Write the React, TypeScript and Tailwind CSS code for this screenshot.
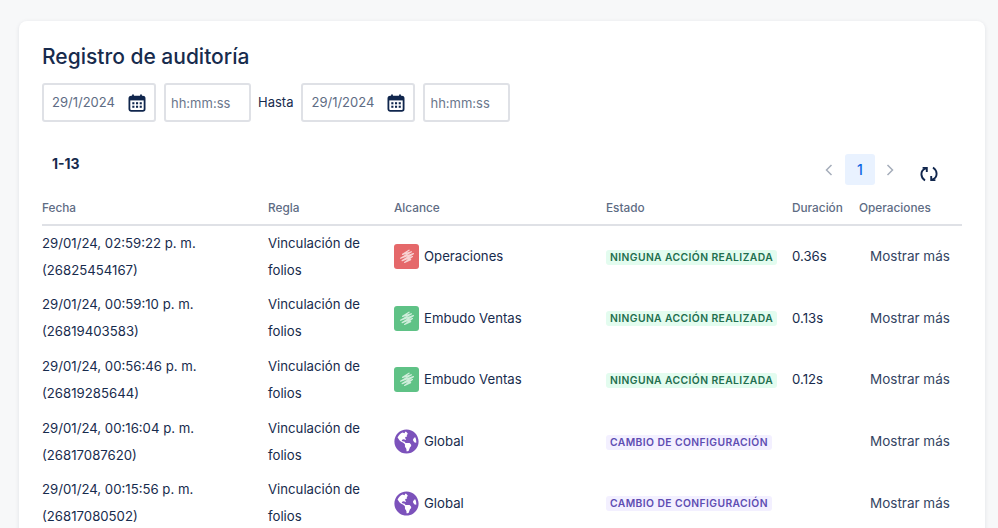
import { FaGlobeAmericas } from "react-icons/fa";

const FONT = "font-['Inter',sans-serif]";

function CalendarIcon() {
  return (
    <svg width="18" height="18" viewBox="0 0 18 18" className="shrink-0">
      <path d="M5 0.5v3.5M13 0.5v3.5" stroke="#10264d" strokeWidth="1.8" />
      <rect x="1.4" y="2.6" width="15.2" height="14.2" rx="1.8" fill="none" stroke="#10264d" strokeWidth="1.8" />
      <rect x="1.5" y="2.6" width="15" height="3.8" fill="#10264d" />
      <g fill="#10264d">
        <rect x="4.3" y="8.2" width="2.1" height="2.1" />
        <rect x="8" y="8.2" width="2.1" height="2.1" />
        <rect x="11.7" y="8.2" width="2.1" height="2.1" />
        <rect x="4.3" y="11.7" width="2.1" height="2.1" />
        <rect x="8" y="11.7" width="2.1" height="2.1" />
        <rect x="11.7" y="11.7" width="2.1" height="2.1" />
      </g>
    </svg>
  );
}

function RefreshIcon() {
  return (
    <svg width="18" height="18" viewBox="0 0 18 18" fill="none" stroke="#10264d" strokeWidth="1.9">
      <path d="M6 3.4C3 4.2 1.4 6.6 1.4 9.2c0 2.5 1.3 4.7 3.6 6.3" />
      <path d="M2.6 2.9H6.8V7" />
      <path d="M12 14.6c3-.8 4.6-3.2 4.6-5.8 0-2.5-1.3-4.7-3.6-6.3" />
      <path d="M15.4 15.1H11.2V11" />
    </svg>
  );
}

function Scribble({ bg }: { bg: string }) {
  return (
    <span className={`flex h-[25px] w-[25px] shrink-0 items-center justify-center rounded-[3px] ${bg}`}>
      <svg width="16" height="15" viewBox="0 0 16 15" fill="none" stroke="#ffffff" strokeOpacity="0.7" strokeWidth="1.3" strokeLinecap="round" strokeLinejoin="round">
        <path d="M10 1.2 3.6 5.4 12.4 2.8 1.6 9.2 14.4 4.6 3.2 11.6 13.4 7.6 5.6 13.4 11.6 10.6" />
      </svg>
    </span>
  );
}

function DateBox() {
  return (
    <div className="flex h-[39px] w-[114px] items-center justify-between rounded-[3px] border-2 border-[#dfe1e6] pl-[8px] pr-[8px]">
      <span className="text-[13px] text-[#5e6c84]">29/1/2024</span>
      <CalendarIcon />
    </div>
  );
}

function TimeBox() {
  return (
    <div className="flex h-[39px] w-[87px] items-center rounded-[3px] border-2 border-[#dfe1e6] pl-[5px]">
      <span className="pt-[3px] text-[13px] text-[#6b778c]">hh:mm:ss</span>
    </div>
  );
}

type Row = {
  date: string;
  id: string;
  scope: "red" | "green" | "global";
  scopeName: string;
  status: "none" | "config";
  duration: string;
};

const rows: Row[] = [
  { date: "29/01/24, 02:59:22 p. m.", id: "(26825454167)", scope: "red", scopeName: "Operaciones", status: "none", duration: "0.36s" },
  { date: "29/01/24, 00:59:10 p. m.", id: "(26819403583)", scope: "green", scopeName: "Embudo Ventas", status: "none", duration: "0.13s" },
  { date: "29/01/24, 00:56:46 p. m.", id: "(26819285644)", scope: "green", scopeName: "Embudo Ventas", status: "none", duration: "0.12s" },
  { date: "29/01/24, 00:16:04 p. m.", id: "(26817087620)", scope: "global", scopeName: "Global", status: "config", duration: "" },
  { date: "29/01/24, 00:15:56 p. m.", id: "(26817080502)", scope: "global", scopeName: "Global", status: "config", duration: "" },
];

const GRID = "grid grid-cols-[226px_126px_212px_186px_67px_103px]";

function ScopeIcon({ scope }: { scope: Row["scope"] }) {
  if (scope === "red") return <Scribble bg="bg-[#e5686a]" />;
  if (scope === "green") return <Scribble bg="bg-[#5fc286]" />;
  return <FaGlobeAmericas className="shrink-0 text-[25px] text-[#7c52bb]" />;
}

function Status({ status }: { status: Row["status"] }) {
  if (status === "none") {
    return (
      <span className="mt-px rounded-[3px] bg-[#e3fcef] px-[4px] text-[10.3px] font-semibold leading-[15px] tracking-[0.42px] text-[#216e4e]">
        NINGUNA ACCIÓN REALIZADA
      </span>
    );
  }
  return (
    <span className="mt-px rounded-[3px] bg-[#f3f0ff] px-[4px] text-[10.3px] font-semibold leading-[15px] tracking-[0.42px] text-[#5e4db2]">
      CAMBIO DE CONFIGURACIÓN
    </span>
  );
}

export default function App() {
  return (
    <div className={`${FONT} h-[528px] w-[998px] overflow-hidden bg-[#f7f8f9] pl-[19px] pr-[13px] pt-[21px] text-[#172b4d]`}>
      <div className="h-[560px] rounded-t-[8px] bg-white pl-[23px] pr-[23px] pt-[21px] shadow-[0_1px_4px_rgba(9,30,66,0.1)]">
        <h1 className="text-[21px] font-medium leading-[30px] text-[#172b4d]">Registro de auditoría</h1>
        <div className="mt-[11px] flex items-center">
          <DateBox />
          <div className="ml-[8px]"><TimeBox /></div>
          <span className="ml-[7px] text-[13px] text-[#172b4d]">Hasta</span>
          <div className="ml-[8px]"><DateBox /></div>
          <div className="ml-[8px]"><TimeBox /></div>
        </div>

        <div className="mt-[32px] flex h-[40px] items-start justify-between">
          <span className="ml-[10px] text-[14px] font-bold leading-[20px]">1-13</span>
          <div className="mr-[24px] flex items-center">
            <svg width="10" height="12" viewBox="0 0 10 12" fill="none" stroke="#a5adba" strokeWidth="1.5">
              <path d="M7.5 1 2.5 6l5 5" />
            </svg>
            <span className="ml-[11px] flex h-[31px] w-[30px] items-center justify-center rounded-[3px] bg-[#e9f2ff] text-[14px] font-medium text-[#0c66e4]">1</span>
            <svg className="ml-[10px]" width="10" height="12" viewBox="0 0 10 12" fill="none" stroke="#a5adba" strokeWidth="1.5">
              <path d="M2.5 1l5 5-5 5" />
            </svg>
            <span className="ml-[25px] mt-[9px] flex"><RefreshIcon /></span>
          </div>
        </div>

        <div className={`${GRID} mt-[3px] h-[29px] w-[920px] items-center border-b-2 border-[#dfe1e6] pb-[3px] text-[11.8px] font-medium text-[#5e6c84]`}>
          <span>Fecha</span>
          <span>Regla</span>
          <span>Alcance</span>
          <span>Estado</span>
          <span>Duración</span>
          <span>Operaciones</span>
        </div>

        <div className="w-[920px]">
          {rows.map((r) => (
            <div key={r.id} className={`${GRID} h-[61.6px] items-center text-[13.2px] leading-[27px]`}>
              <div>
                <div>{r.date}</div>
                <div>{r.id}</div>
              </div>
              <div>
                <div>Vinculación de</div>
                <div>folios</div>
              </div>
              <div className="flex items-center gap-[5px]">
                <ScopeIcon scope={r.scope} />
                <span>{r.scopeName}</span>
              </div>
              <div className="flex">
                <Status status={r.status} />
              </div>
              <div>{r.duration}</div>
              <div className="pl-[11px] text-[13.5px] font-normal text-[#344563]">Mostrar más</div>
            </div>
          ))}
        </div>
      </div>
    </div>
  );
}
